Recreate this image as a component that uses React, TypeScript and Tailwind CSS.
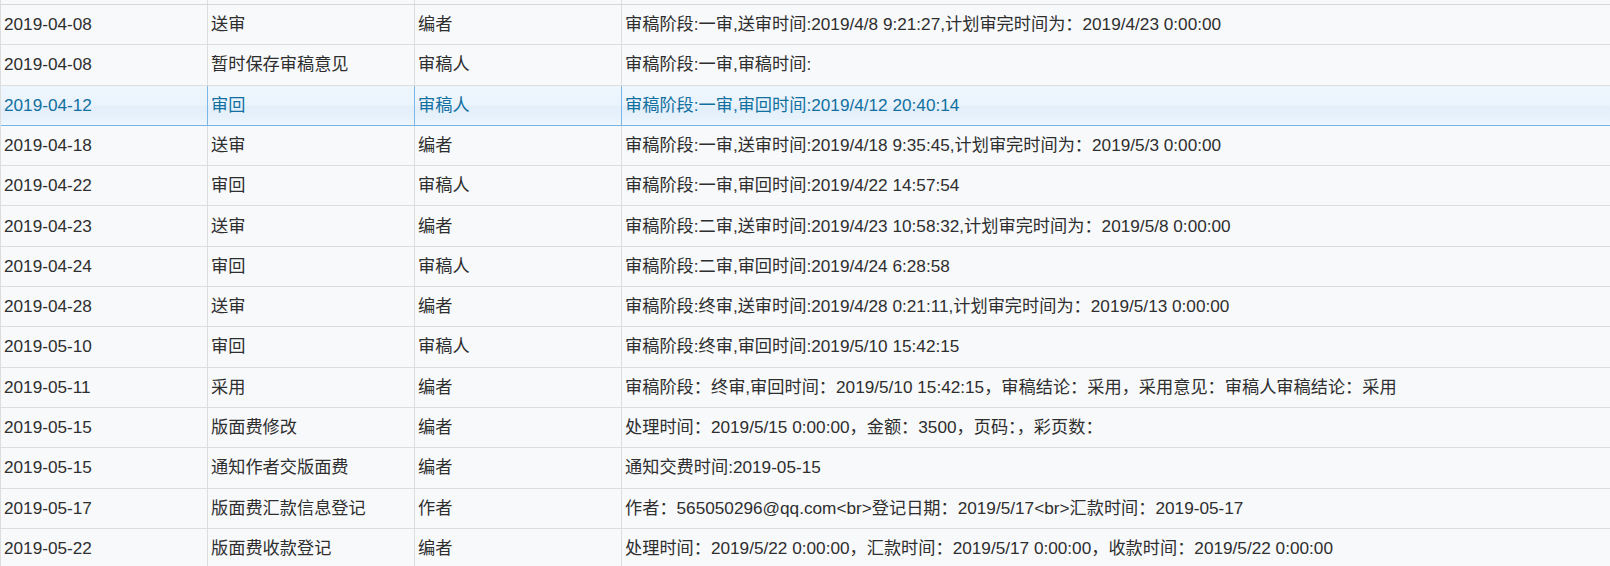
type Row = {
  date: string;
  action: string;
  role: string;
  detail: string;
  selected?: boolean;
};

const rows: Row[] = [
  { date: "2019-04-08", action: "送审", role: "编者", detail: "审稿阶段:一审,送审时间:2019/4/8 9:21:27,计划审完时间为：2019/4/23 0:00:00" },
  { date: "2019-04-08", action: "暂时保存审稿意见", role: "审稿人", detail: "审稿阶段:一审,审稿时间:" },
  { date: "2019-04-12", action: "审回", role: "审稿人", detail: "审稿阶段:一审,审回时间:2019/4/12 20:40:14", selected: true },
  { date: "2019-04-18", action: "送审", role: "编者", detail: "审稿阶段:一审,送审时间:2019/4/18 9:35:45,计划审完时间为：2019/5/3 0:00:00" },
  { date: "2019-04-22", action: "审回", role: "审稿人", detail: "审稿阶段:一审,审回时间:2019/4/22 14:57:54" },
  { date: "2019-04-23", action: "送审", role: "编者", detail: "审稿阶段:二审,送审时间:2019/4/23 10:58:32,计划审完时间为：2019/5/8 0:00:00" },
  { date: "2019-04-24", action: "审回", role: "审稿人", detail: "审稿阶段:二审,审回时间:2019/4/24 6:28:58" },
  { date: "2019-04-28", action: "送审", role: "编者", detail: "审稿阶段:终审,送审时间:2019/4/28 0:21:11,计划审完时间为：2019/5/13 0:00:00" },
  { date: "2019-05-10", action: "审回", role: "审稿人", detail: "审稿阶段:终审,审回时间:2019/5/10 15:42:15" },
  { date: "2019-05-11", action: "采用", role: "编者", detail: "审稿阶段：终审,审回时间：2019/5/10 15:42:15，审稿结论：采用，采用意见：审稿人审稿结论：采用" },
  { date: "2019-05-15", action: "版面费修改", role: "编者", detail: "处理时间：2019/5/15 0:00:00，金额：3500，页码：，彩页数：" },
  { date: "2019-05-15", action: "通知作者交版面费", role: "编者", detail: "通知交费时间:2019-05-15" },
  { date: "2019-05-17", action: "版面费汇款信息登记", role: "作者", detail: "作者：565050296@qq.com<br>登记日期：2019/5/17<br>汇款时间：2019-05-17" },
  { date: "2019-05-22", action: "版面费收款登记", role: "编者", detail: "处理时间：2019/5/22 0:00:00，汇款时间：2019/5/17 0:00:00，收款时间：2019/5/22 0:00:00" },
];

function GridRow({ row }: { row: Row }) {
  const sel = !!row.selected;
  const cell = `w-[207px] shrink-0 h-full flex items-center pl-[3px] border-r whitespace-nowrap overflow-hidden ${
    sel ? "border-[#7ab6e6]" : "border-[#dcdddf]"
  }`;
  return (
    <div
      className={`flex h-[40.3px] border-b ${
        sel
          ? "border-[#76b4e6] text-[#11709f] bg-[linear-gradient(to_bottom,#edf5fd_0%,#ebf4fc_48%,#e2eefa_55%,#e6f1fb_80%,#f0f7fd_100%)]"
          : "border-[#dcdddf] text-[#2e2e2e] bg-[#f8f9fb]"
      }`}
    >
      <div className={cell}>{row.date}</div>
      <div className={cell}>{row.action}</div>
      <div className={cell}>{row.role}</div>
      <div className="flex-1 h-full flex items-center pl-[3px] whitespace-nowrap overflow-hidden">
        {row.detail}
      </div>
    </div>
  );
}

export default function App() {
  return (
    <div
      className="w-[1610px] h-[566px] overflow-hidden bg-[#f8f9fb] text-[17.2px] leading-none"
      style={{ fontFamily: '"Liberation Sans", Arial, "Noto Sans CJK SC", sans-serif' }}
    >
      <div className="border-l border-[#dcdddf]">
        {/* tail of the row above, cut by the scroll */}
        <div className="flex h-[5px] border-b border-[#d6d7d9] bg-[#f8f9fb]">
          <div className="w-[207px] shrink-0 border-r border-[#dcdddf]" />
          <div className="w-[207px] shrink-0 border-r border-[#dcdddf]" />
          <div className="w-[207px] shrink-0 border-r border-[#dcdddf]" />
          <div className="flex-1" />
        </div>
        {rows.map((r, i) => (
          <GridRow key={i} row={r} />
        ))}
      </div>
    </div>
  );
}
